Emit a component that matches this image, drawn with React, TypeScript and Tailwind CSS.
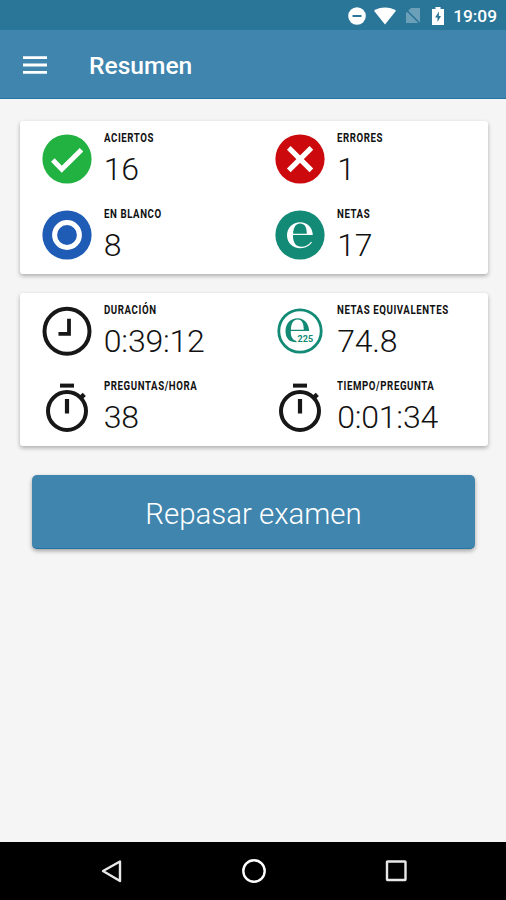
import type { ReactNode } from 'react';

type StatProps = {
  icon: ReactNode;
  label: string;
  value: string;
};

const CheckIcon = () => (
  <svg viewBox="0 0 50 50" className="w-[50px] h-[50px]">
    <circle cx="25" cy="25" r="24.6" fill="#22b242" />
    <path d="M10.8 26l9 9.2L39.5 15.8" fill="none" stroke="#fff" strokeWidth="5" />
  </svg>
);

const CrossIcon = () => (
  <svg viewBox="0 0 50 50" className="w-[50px] h-[50px]">
    <circle cx="25" cy="25" r="24.6" fill="#cc0a0d" />
    <path d="M13.8 13.8l22.6 22.6M36.4 13.8L13.8 36.4" fill="none" stroke="#fff" strokeWidth="5.2" />
  </svg>
);

const BlankIcon = () => (
  <svg viewBox="0 0 50 50" className="w-[50px] h-[50px]">
    <circle cx="25" cy="25" r="24.6" fill="#1f5cb5" />
    <circle cx="25" cy="25" r="12.4" fill="none" stroke="#fff" strokeWidth="5" />
  </svg>
);

const NetIcon = () => (
  <svg viewBox="0 0 50 50" className="w-[50px] h-[50px]">
    <circle cx="25" cy="25" r="24.6" fill="#128a76" />
    <path d="M18 25H37.8C37.6 17 32 12.2 25.3 12.2C17.5 12.2 12 17.8 12 25.3C12 33 17.5 38.2 25.5 38.2C30.5 38.2 34.6 36 37 32.3L36 31.7C33.6 35 30.2 36.8 26.5 36.8C21 36.8 18 32.7 18 26ZM18.1 23.8C18.4 17.2 20.8 13.5 25.2 13.5C29.6 13.5 31.8 17 31.8 23.8Z" fill="#fff" fillRule="evenodd" />
  </svg>
);

const NetEquivalentIcon = () => (
  <svg viewBox="0 0 50 50" className="w-[50px] h-[50px]">
    <circle cx="25" cy="25" r="21.2" fill="none" stroke="#128a76" strokeWidth="2.8" />
    <path d="M15.8 25H34.2C33.8 17 29 12.2 22.8 12.2C15.5 12.2 10.5 17.6 10.5 25C10.5 32.4 14.5 36.3 21.5 36.3V35C17.8 34 15.8 30.8 15.8 26.2ZM15.9 23.8C16.2 17.1 18.4 13.5 22.7 13.5C27 13.5 28.6 17.1 28.8 23.8Z" fill="#128a76" fillRule="evenodd" />
    <text x="22.6" y="36.3" fontSize="8.5" fontWeight="700" textLength="15.5" lengthAdjust="spacingAndGlyphs" fill="#128a76">225</text>
  </svg>
);

const ClockIcon = () => (
  <svg viewBox="0 0 50 50" className="w-[50px] h-[50px]" fill="none" stroke="#171717">
    <circle cx="25" cy="25.3" r="22.5" strokeWidth="4" />
    <path d="M27 12.8V27.8H16.5" strokeWidth="3.8" />
  </svg>
);

const StopwatchIcon = () => (
  <svg viewBox="0 0 50 50" className="w-[50px] h-[50px]" fill="none" stroke="#171717">
    <circle cx="25" cy="29" r="19" strokeWidth="4" />
    <path d="M18 3.6H32" strokeWidth="4" />
    <path d="M25 17V31.5" strokeWidth="4.2" />
    <path d="M38 16.5L42.3 12.4" strokeWidth="4.5" />
  </svg>
);

const Stat = ({ icon, label, value }: StatProps) => (
  <div className="flex h-[76px] pl-[22px] pt-[13px]">
    {icon}
    <div className="-ml-[0.2px] pl-3">
      <div className="-mt-px h-[10px] w-max origin-left scale-x-[.78] whitespace-nowrap text-[12.4px] leading-[10px] font-bold tracking-[0.75px] text-[#111]">
        {label}
      </div>
      <div className="mt-[7px] text-[32px] leading-[38px] font-light tracking-[-0.2px] text-[#111]">{value}</div>
    </div>
  </div>
);

const Card = ({ children }: { children: ReactNode }) => (
  <section className="grid h-[153px] grid-cols-[233.4px_1fr] content-start rounded-[3px] bg-white shadow-[0_2px_4px_rgba(0,0,0,0.3)]">
    {children}
  </section>
);

const StatusBar = () => (
  <div className="flex h-[30px] items-center justify-end bg-[#2a7699] pr-[9px] pt-px text-white">
    <svg viewBox="0 0 18 18" className="h-[18px] w-[18px]">
      <circle cx="9" cy="9" r="8.8" fill="#fff" />
      <path d="M4.5 9h9" stroke="#2a7699" strokeWidth="2" />
    </svg>
    <svg viewBox="0 0 22 18" className="ml-2 h-[18px] w-[22px]">
      <path d="M0 3.8C6-.6 16-.6 22 3.8L11 17.5Z" fill="#fff" />
    </svg>
    <svg viewBox="0 0 16 17" className="ml-[9px] h-[17px] w-4">
      <path d="M1 6L6 1H15V16H1Z" fill="#6c9fb8" />
      <path d="M0 1.5L15 16.5" stroke="#2a7699" strokeWidth="1.6" />
    </svg>
    <svg viewBox="0 0 12 18" className="ml-[11px] h-[18px] w-3">
      <path d="M3.5 0h5v2H12v16H0V2h3.5z" fill="#fff" />
      <path d="M7 4.5L3 10.5h2.5V15L9 9H6.8z" fill="#2a7699" />
    </svg>
    <span className="ml-[9px] text-[17.3px] leading-5 font-medium">19:09</span>
  </div>
);

export default function App() {
  return (
    <div className="flex h-[900px] w-[506px] flex-col overflow-hidden bg-[#f5f5f5] font-['Roboto',sans-serif]">
      <StatusBar />

      <header className="flex h-[69px] items-center border-b border-[#2074a3] bg-[#3f85ae] pt-px pl-[23px] text-white">
        <svg viewBox="0 0 24 18" className="h-[18px] w-6">
          <path d="M0 1.7H24M0 9H24M0 16.3H24" stroke="#fff" strokeWidth="2.8" />
        </svg>
        <h1 className="ml-[42px] pt-[3px] text-[24.6px] leading-8 font-medium">Resumen</h1>
      </header>

      <main className="flex flex-1 flex-col pt-[22px] pr-[18px] pl-5">
        <Card>
          <Stat icon={<CheckIcon />} label="ACIERTOS" value="16" />
          <Stat icon={<CrossIcon />} label="ERRORES" value="1" />
          <Stat icon={<BlankIcon />} label="EN BLANCO" value="8" />
          <Stat icon={<NetIcon />} label="NETAS" value="17" />
        </Card>

        <div className="mt-[19px]">
          <Card>
            <Stat icon={<ClockIcon />} label="DURACIÓN" value="0:39:12" />
            <Stat icon={<NetEquivalentIcon />} label="NETAS EQUIVALENTES" value="74.8" />
            <Stat icon={<StopwatchIcon />} label="PREGUNTAS/HORA" value="38" />
            <Stat icon={<StopwatchIcon />} label="TIEMPO/PREGUNTA" value="0:01:34" />
          </Card>
        </div>

        <button
          type="button"
          className="mr-[13px] ml-3 mt-[29px] h-[74px] rounded-[5px] border-b border-[#2074a3] bg-[#3f85ae] pt-1.5 text-[29.4px] font-light text-white shadow-[0_2px_4px_rgba(0,0,0,0.35)]"
        >
          Repasar examen
        </button>
      </main>

      <nav className="grid h-[58px] grid-cols-[40px_40px_40px] content-center justify-center gap-x-[102px] bg-black pl-px">
        <svg viewBox="0 0 40 26" className="h-[26px] w-10" fill="none" stroke="#e8e8e8" strokeWidth="2.4">
          <path d="M28 3.5V23L11 13Z" strokeLinejoin="round" />
        </svg>
        <svg viewBox="0 0 40 26" className="h-[26px] w-10" fill="none" stroke="#fff" strokeWidth="2.4">
          <circle cx="20" cy="13" r="10.7" />
        </svg>
        <svg viewBox="0 0 40 26" className="h-[26px] w-10" fill="none" stroke="#e8e8e8" strokeWidth="2.4">
          <rect x="11" y="3.5" width="18.5" height="18.5" rx="0.5" />
        </svg>
      </nav>
    </div>
  );
}
